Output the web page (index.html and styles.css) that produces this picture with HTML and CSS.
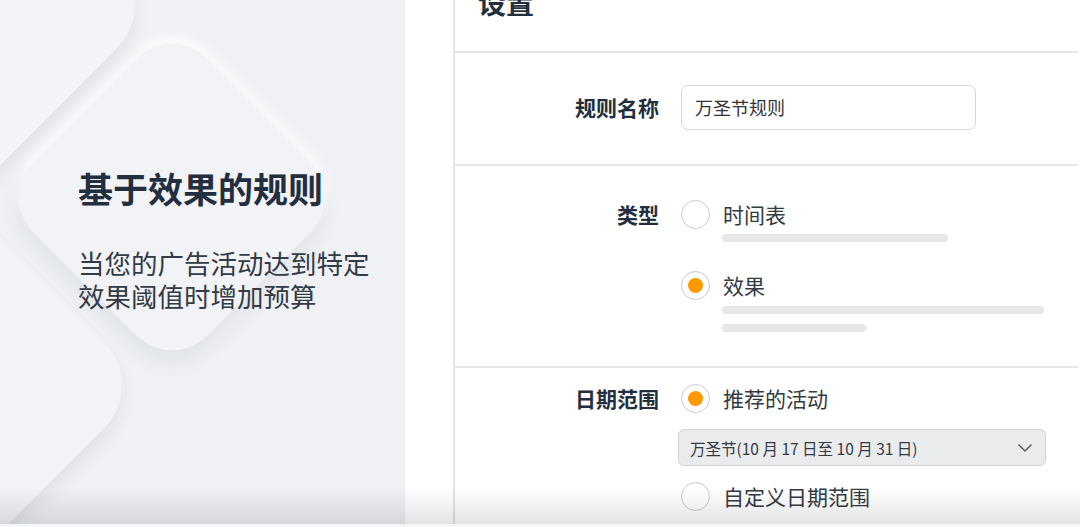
FILE: index.html
```html
<!DOCTYPE html>
<html lang="zh-CN">
<head>
<meta charset="utf-8">
<title>基于效果的规则</title>
<link rel="stylesheet" href="styles.css">
</head>
<body>
<div class="page">
  <section class="hero">
    <div class="deco deco-top"></div>
    <div class="deco deco-bottom"></div>
    <div class="deco deco-center"></div>
    <div class="hero-text">
      <h1 class="hero-title">基于效果的规则</h1>
      <p class="hero-sub">当您的广告活动达到特定<br>效果阈值时增加预算</p>
    </div>
  </section>
  <main class="main">
    <div class="card">
      <div class="card-head"><h2 class="card-title">设置</h2></div>
      <div class="row row-name">
        <div class="label">规则名称</div>
        <div class="control"><div class="input">万圣节规则</div></div>
      </div>
      <div class="row row-type">
        <div class="label">类型</div>
        <div class="control">
          <div class="option">
            <span class="radio"></span>
            <div class="opt-body">
              <div class="opt-text">时间表</div>
              <div class="bar bar-a"></div>
            </div>
          </div>
          <div class="option option-2">
            <span class="radio checked"></span>
            <div class="opt-body">
              <div class="opt-text">效果</div>
              <div class="bar bar-b"></div>
              <div class="bar bar-c"></div>
            </div>
          </div>
        </div>
      </div>
      <div class="row row-date">
        <div class="label">日期范围</div>
        <div class="control">
          <div class="option">
            <span class="radio checked"></span>
            <div class="opt-body"><div class="opt-text">推荐的活动</div></div>
          </div>
          <div class="select">
            <span class="select-text">万圣节(10 月 17 日至 10 月 31 日)</span>
            <svg class="chev" width="14" height="8" viewBox="0 0 14 8"><path d="M1 1l6 6 6-6" fill="none" stroke="#555" stroke-width="1.4" stroke-linecap="round" stroke-linejoin="round"/></svg>
          </div>
          <div class="option option-3">
            <span class="radio"></span>
            <div class="opt-body"><div class="opt-text">自定义日期范围</div></div>
          </div>
        </div>
      </div>
    </div>
  </main>
  <div class="shade"></div>
</div>
</body>
</html>
```

FILE: styles.css
```css
* { box-sizing: border-box; }
html, body { margin: 0; padding: 0; }
body {
  width: 1080px;
  height: 527px;
  overflow: hidden;
  background: #ffffff;
  font-family: "Noto Sans CJK SC", "Noto Sans", sans-serif;
}
.page {
  position: relative;
  display: flex;
  width: 1080px;
  height: 527px;
  overflow: hidden;
}

/* left hero */
.hero {
  position: relative;
  width: 405px;
  flex: none;
  background: #eff1f5;
  overflow: hidden;
}
.deco {
  position: absolute;
  background: #f3f4f7;
  transform: rotate(45deg);
}
.deco-top {
  width: 340px; height: 340px;
  left: -250px; top: -165px;
  border-radius: 62px;
  box-shadow: 6px 8px 18px rgba(40, 50, 70, 0.08);
}
.deco-bottom {
  width: 350px; height: 350px;
  left: -275px; top: 210px;
  border-radius: 62px;
  box-shadow: 6px 8px 18px rgba(40, 50, 70, 0.08);
}
.deco-center {
  width: 246px; height: 246px;
  left: 49px; top: 74px;
  border-radius: 50px;
  background: #f2f3f7;
  box-shadow: 8px 10px 20px rgba(40, 50, 70, 0.07), -5px -5px 12px rgba(255, 255, 255, 0.9);
}
.hero-text {
  position: relative;
  padding: 168px 0 0 78px;
}
.hero-title {
  margin: 0;
  font-size: 35px;
  line-height: 40px;
  font-weight: 700;
  color: #232f3e;
}
.hero-sub {
  margin: 38px 0 0;
  font-size: 26.5px;
  line-height: 33px;
  font-weight: 400;
  color: #333b46;
}

/* right */
.main {
  flex: 1;
  padding-left: 48px;
  padding-right: 2px;
}
.card {
  height: 100%;
  border-left: 2px solid #e4e4e4;
}
.card-head {
  display: flex;
  align-items: flex-start;
  height: 53px;
  padding-left: 23px;
  border-bottom: 2px solid #e6e6e6;
}
.card-title {
  margin: -12px 0 0;
  font-size: 28px;
  line-height: 28px;
  font-weight: 700;
  color: #232f3e;
}
.row {
  display: grid;
  grid-template-columns: 204px 1fr;
  column-gap: 22px;
  align-items: start;
  border-bottom: 2px solid #e6e6e6;
}
.label {
  text-align: right;
  font-size: 21px;
  line-height: 29px;
  font-weight: 700;
  color: #232f3e;
}
.row-name {
  padding: 32px 0 34px;
  align-items: center;
}
.input {
  width: 295px;
  height: 45px;
  border: 1px solid #d5d9d9;
  border-radius: 7px;
  padding-left: 13px;
  font-size: 18px;
  line-height: 43px;
  color: #333;
}
.row-type { padding: 34px 0 34px; }
.row-date { padding: 16px 0 30px; border-bottom: none; }

.option {
  display: flex;
  align-items: flex-start;
  gap: 12px;
}
.option-2 { margin-top: 29px; }
.option-3 { margin-top: 16px; }
.radio {
  flex: none;
  width: 29px;
  height: 29px;
  border-radius: 50%;
  border: 1px solid #c9cacc;
  background: #fff;
  display: flex;
  align-items: center;
  justify-content: center;
}
.radio.checked::after {
  content: "";
  width: 15px;
  height: 15px;
  border-radius: 50%;
  background: #ff9900;
}
.opt-text {
  font-size: 21px;
  line-height: 29px;
  color: #333a42;
  padding-left: 1px;
}
.bar {
  height: 8px;
  border-radius: 4px;
  background: #e7e7e7;
}
.bar-a { width: 226px; margin-top: 5px; }
.bar-b { width: 322px; margin-top: 6px; }
.bar-c { width: 144px; margin-top: 10px; }

.select {
  margin: 16px 0 0 -3px;
  width: 368px;
  height: 37px;
  border: 1px solid #d3d4d6;
  border-radius: 6px;
  background: #eaebed;
  display: flex;
  align-items: center;
  justify-content: space-between;
  padding: 0 13px 0 11px;
}
.select-text {
  font-size: 15.5px;
  color: #333a42;
}
.chev { display: block; }

/* bottom fade */
.shade {
  position: absolute;
  left: 0;
  right: 0;
  bottom: 3px;
  height: 37px;
  background: linear-gradient(rgba(0, 0, 0, 0), rgba(0, 0, 0, 0.11));
  pointer-events: none;
}
.shade::after {
  content: "";
  position: absolute;
  left: 0;
  right: 0;
  top: 37px;
  height: 3px;
  background: #f6f6f6;
}
```
